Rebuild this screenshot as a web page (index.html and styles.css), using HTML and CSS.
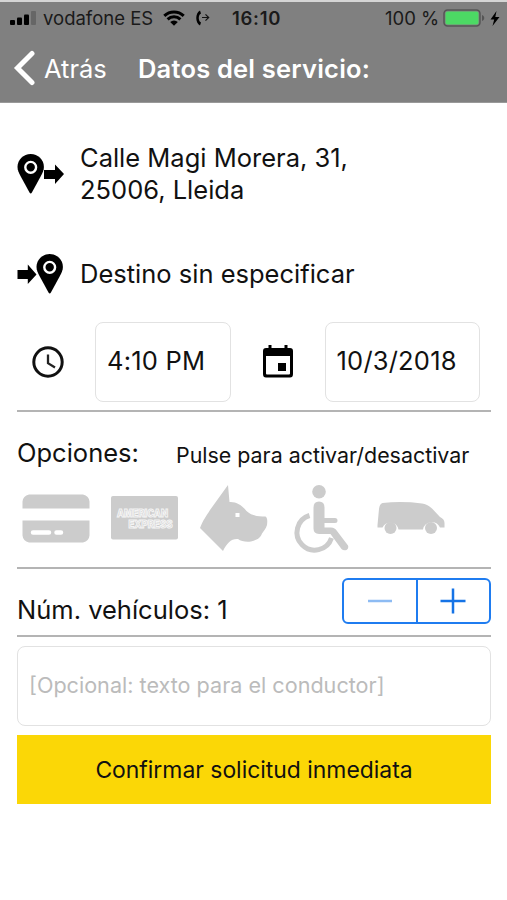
FILE: index.html
```
<!DOCTYPE html>
<html lang="es">

<head>
    <meta charset="UTF-8">
    <meta name="viewport" content="width=device-width, initial-scale=1.0">
    <title>Datos del servicio</title>

    <link rel="stylesheet" href="styles.css">
</head>

<body>
    <header class="header">
        <div class="status">
            <svg class="signal" width="27" height="16" viewBox="0 0 27 16">
                <rect x="0" y="10" width="5" height="5" rx="1" />
                <rect x="7" y="7.500" width="5" height="7.500" rx="1" />
                <rect x="14" y="4.500" width="5" height="10.500" rx="1" />
                <rect x="21" y="1" width="5" height="14" rx="1" fill="#666" />
            </svg>
            <span class="carrier">vodafone ES</span>
            <svg class="wifi" width="22" height="16" viewBox="0 0 22 16">
                <path d="M1.300 5.900a14 14 0 0 1 19.400 0M4.600 9.400a9.200 9.200 0 0 1 12.800 0" fill="none" stroke="#000" stroke-width="3" />
                <path d="M11 15.800 7.200 12a5.400 5.400 0 0 1 7.600 0z" />
            </svg>
            <svg class="forward" width="15" height="16" viewBox="0 0 15 16">
                <path d="M4 .500C-1 3-1 13 4 15.500L5 12.500 3.500 11.300C2.500 9 2.500 7 3.500 4.700L5 3.500z" />
                <path d="M6 7.500h7M9.500 4.300l3.200 3.200-3.200 3.200" fill="none" stroke="#111" stroke-width="1.200" />
            </svg>
            <span class="clock">16:10</span>
            <span class="percent">100 %</span>
            <svg class="battery" width="42" height="18" viewBox="0 0 42 18">
                <rect x="1" y="1" width="36" height="16" rx="3.500" fill="none" stroke="#555" stroke-width="1.500" />
                <rect x="2.500" y="2.500" width="33" height="13" rx="2" fill="#4cd964" />
                <path d="M39 6c3 1 3 5 0 6z" fill="#555" />
            </svg>
            <svg class="bolt" width="10" height="15" viewBox="0 0 10 15">
                <path d="M6.500 0 .500 8.500h3.700L2.500 15 9.500 6H5.300z" />
            </svg>
        </div>
        <nav class="nav">
            <svg class="chevron" width="22" height="36" viewBox="0 0 22 36">
                <path d="M19 3.500 4.500 18 19 32.500" fill="none" stroke="#fff" stroke-width="5" stroke-linecap="round" stroke-linejoin="miter" />
            </svg>
            <a class="back">Atrás</a>
            <h1 class="title">Datos del servicio:</h1>
        </nav>
    </header>

    <main class="container">
        <section class="address origin">
            <svg width="48" height="42" viewBox="0 0 48 42">
                <path d="M13.700 1C6.500 1 .500 6.600.500 14c0 3 1.400 6 3 9L12.500 39.500q1.200 2 2.400 0L23.900 23c1.600-3 3-6 3-9C26.900 6.600 21 1 13.700 1z" />
                <circle cx="13.700" cy="14.300" r="5.400" fill="none" stroke="#fff" stroke-width="2.400" />
                <path d="M27 17h11v-5.500L47 21 38 31V26H27z" />
            </svg>
            <p><span class="street">Calle Magi Morera, 31,</span><br><span class="city">25006, Lleida</span></p>
        </section>

        <section class="address destination">
            <svg width="48" height="42" viewBox="0 0 48 42">
                <path d="M32.700 1c-7.200 0-13.200 5.600-13.200 13 0 3 1.400 6 3 9l9 16.500q1.200 2 2.400 0L42.900 23c1.600-3 3-6 3-9C45.900 6.600 40 1 32.700 1z" />
                <circle cx="32.700" cy="14.300" r="5.400" fill="none" stroke="#fff" stroke-width="2.400" />
                <path d="M.500 17h10.300v-5.500L19.500 21.500 10.800 31v-5H.500z" />
            </svg>
            <p>Destino sin especificar</p>
        </section>

        <section class="when">
            <svg class="icon-time" width="32" height="32" viewBox="0 0 32 32">
                <circle cx="16" cy="16" r="14.200" fill="none" stroke="#111" stroke-width="3" />
                <path d="M16 8.500v8.700l7 4.300" fill="none" stroke="#222" stroke-width="2.300" />
            </svg>
            <div class="field time">4:10 PM</div>
            <svg class="icon-date" width="30" height="33" viewBox="0 0 30 33">
                <path d="M5.500 0h3v3h13V0h3v3H27q3 0 3 3v23q0 3.500-3 3.500H3Q0 32.500 0 29V6q0-3 3-3h2.500zM3 11v17.500q0 1 1 1h22q1 0 1-1V11z" fill-rule="evenodd" />
                <path d="M15 18h8v8h-8z" />
            </svg>
            <div class="field date">10/3/2018</div>
        </section>

        <section class="options">
            <div class="options-head">
                <h2>Opciones:</h2>
                <span>Pulse para activar/desactivar</span>
            </div>
            <div class="options-icons">
                <svg width="68" height="68" viewBox="0 0 68 68">
                    <path d="M7 9.500h54q6 1.500 6.500 7V23.500H.500v-7Q1 11 7 9.500zM.500 35.500h67v15q-.500 5.500-6.500 7H7Q1 56 .500 50.500z" />
                    <path d="M11 47.500h16M34.500 47.500h4.500" stroke="#fff" stroke-width="4.500" stroke-linecap="round" />
                </svg>
                <svg width="68" height="68" viewBox="0 0 68 68">
                    <rect x="0" y="11" width="67" height="43.500" rx="2" />
                    <g class="amex">
                        <text x="6" y="31.500" textLength="51" lengthAdjust="spacingAndGlyphs">AMERICAN</text>
                        <text x="17.500" y="42.500" textLength="44" lengthAdjust="spacingAndGlyphs">EXPRESS</text>
                    </g>
                </svg>
                <svg width="68" height="68" viewBox="0 0 68 68">
                    <path d="M28 0 29.500 17C36 16.500 42 20 46.500 26 52 31 58 31.500 65.500 31.500 67.500 33 67.500 36 67 40 66 44 63 46.500 62 48.500 60 54 56 55 51 56.500 46 57 41 56.500 38 54 31 53.500 27 58 23 66L0 43C3 35 7 30 10 25z" />
                    <rect x="35.500" y="28" width="4" height="4" fill="#fff" />
                </svg>
                <svg width="68" height="68" viewBox="0 0 68 68">
                    <circle cx="30" cy="6.800" r="6.800" />
                    <path d="M24.500 22.500q0-6 5.500-6t5.500 6v10.500h10.500q2.500 0 2.500 2.500t-2.500 2.500H35.500V42.500h6.500q4 0 6 3.500L59 60.500q1 3-1.500 4.500-3 1-5-1L41.500 49H30Q24.500 48.500 24.500 43.500z" />
                    <path d="M20.500 30.500A17.700 17.700 0 1 0 42.500 53" fill="none" stroke="#ccc" stroke-width="5" />
                </svg>
                <svg width="68" height="68" viewBox="0 0 68 68">
                    <path d="M4.500 18Q24 16 44 18.500 49 19 54 23.500L62 32q4.500 2 4.500 6v4.500h-4.500a9 9 0 0 0-17 2H20.500a8.500 8.500 0 0 0-16-2H-.500V40L1 24q.500-5 3.500-6z" />
                    <circle cx="12.500" cy="43" r="6" />
                    <circle cx="53" cy="43" r="6" />
                </svg>
            </div>
        </section>

        <section class="vehicles">
            <span>Núm. vehículos: 1</span>
            <div class="stepper">
                <button type="button" class="minus" aria-label="Menos">
                    <svg width="26" height="26" viewBox="0 0 26 26"><path d="M1 13h24" /></svg>
                </button>
                <button type="button" class="plus" aria-label="Más">
                    <svg width="26" height="26" viewBox="0 0 26 26"><path d="M.500 13h25M13 .500v25" /></svg>
                </button>
            </div>
        </section>

        <input type="text" class="notes" placeholder="[Opcional: texto para el conductor]">

        <button type="submit" class="confirm">Confirmar solicitud inmediata</button>
    </main>
</body>

</html>
```
FILE: styles.css
```
* {
    box-sizing: border-box;
}

body {
    margin: 0;
    background-color: #fff;
    color: #111;
    font-family: Inter, "Liberation Sans", sans-serif;
    font-size: 25.5px;
}

h1,
h2,
p {
    margin: 0;
    font-weight: normal;
}

svg {
    display: block;
    flex: none;
}

span,
h1,
h2,
p,
a {
    white-space: nowrap;
}

.header {
    height: 103px;
    background-color: #808080;
    border-top: 2px solid #d5d5d5;
    border-bottom: 1px solid #999;
}

.status {
    display: flex;
    align-items: center;
    height: 32px;
    padding-left: 10px;
    font-size: 18.5px;
    color: #1a1a1a;
}

.carrier {
    width: 110px;
    margin-left: 6px;
}

.wifi {
    margin-left: 10px;
}

.forward {
    margin-left: 11px;
}

.clock {
    width: 50px;
    margin-left: 21px;
    font-weight: 600;
    letter-spacing: 0.7px;
}

.percent {
    width: 54px;
    margin-left: 103px;
}

.battery {
    margin-left: 4px;
}

.bolt {
    margin-left: 5px;
}

.nav {
    display: flex;
    align-items: center;
    height: 68px;
    padding-left: 13px;
    color: #fff;
}

.back {
    width: 62px;
    margin-left: 9px;
}

.title {
    margin-left: 32px;
    font-size: 25.5px;
    font-weight: 600;
    letter-spacing: 0.2px;
}

.container {
    padding: 0 16px 0 17px;
}

.address {
    display: flex;
    align-items: center;
    gap: 15px;
    line-height: 32px;
}

.origin {
    height: 142px;
}

.destination {
    height: 58px;
}

.when {
    display: flex;
    align-items: center;
    height: 109px;
    padding: 10px 11px 0 15px;
    border-bottom: 2px solid #b4b4b4;
}

.field {
    display: flex;
    align-items: center;
    height: 80px;
    padding: 0 0 2px 11px;
    border: 1.5px solid #e2e2e2;
    border-radius: 8px;
    letter-spacing: 0.2px;
}

.time {
    width: 136px;
    margin-left: 31px;
}

.icon-date {
    margin-left: 32px;
}

.date {
    width: 156px;
    margin-left: 32px;
}

.options {
    height: 157px;
    padding-top: 22px;
    border-bottom: 2px solid #b4b4b4;
}

.options-head {
    display: flex;
    align-items: center;
    line-height: 38px;
}

.options-head h2 {
    width: 121px;
    font-size: 25.5px;
}

.options-head span {
    margin-left: 38px;
    padding-top: 5px;
    font-size: 21.4px;
    line-height: 33px;
}

.options-icons {
    display: flex;
    gap: 21px;
    margin-top: 13px;
    padding-left: 5px;
    fill: #ccc;
}

.options-icons svg {
    overflow: visible;
}

.amex text {
    font-size: 10px;
    font-weight: 800;
    fill: #ccc;
    stroke: #f4f4f4;
    stroke-width: 1px;
}

.vehicles {
    display: flex;
    align-items: center;
    justify-content: space-between;
    height: 68px;
    padding-bottom: 2px;
    border-bottom: 2px solid #b4b4b4;
}

.vehicles span {
    padding-top: 16px;
}

.stepper {
    display: flex;
    width: 149px;
    height: 46px;
    border: 2px solid #1f7cf0;
    border-radius: 6px;
}

.stepper button {
    display: flex;
    align-items: center;
    justify-content: center;
    flex: 1;
    padding: 0;
    border: none;
    background: none;
}

.stepper path {
    fill: none;
    stroke: #1573e6;
    stroke-width: 2.5px;
}

.stepper .plus {
    border-left: 2px solid #1f7cf0;
}

.minus path {
    stroke: #8dbbf3;
}

.notes {
    display: block;
    width: 100%;
    height: 80px;
    margin-top: 9px;
    padding: 0 11px 2px;
    border: 1.5px solid #e2e2e2;
    border-radius: 8px;
    font-family: inherit;
    font-size: 21.6px;
}

.notes::placeholder {
    color: #bbb;
}

.confirm {
    display: block;
    width: 100%;
    height: 69px;
    margin-top: 9px;
    padding: 0;
    border: none;
    background-color: #fbd706;
    color: #111;
    font-family: inherit;
    font-size: 22.9px;
}
```
